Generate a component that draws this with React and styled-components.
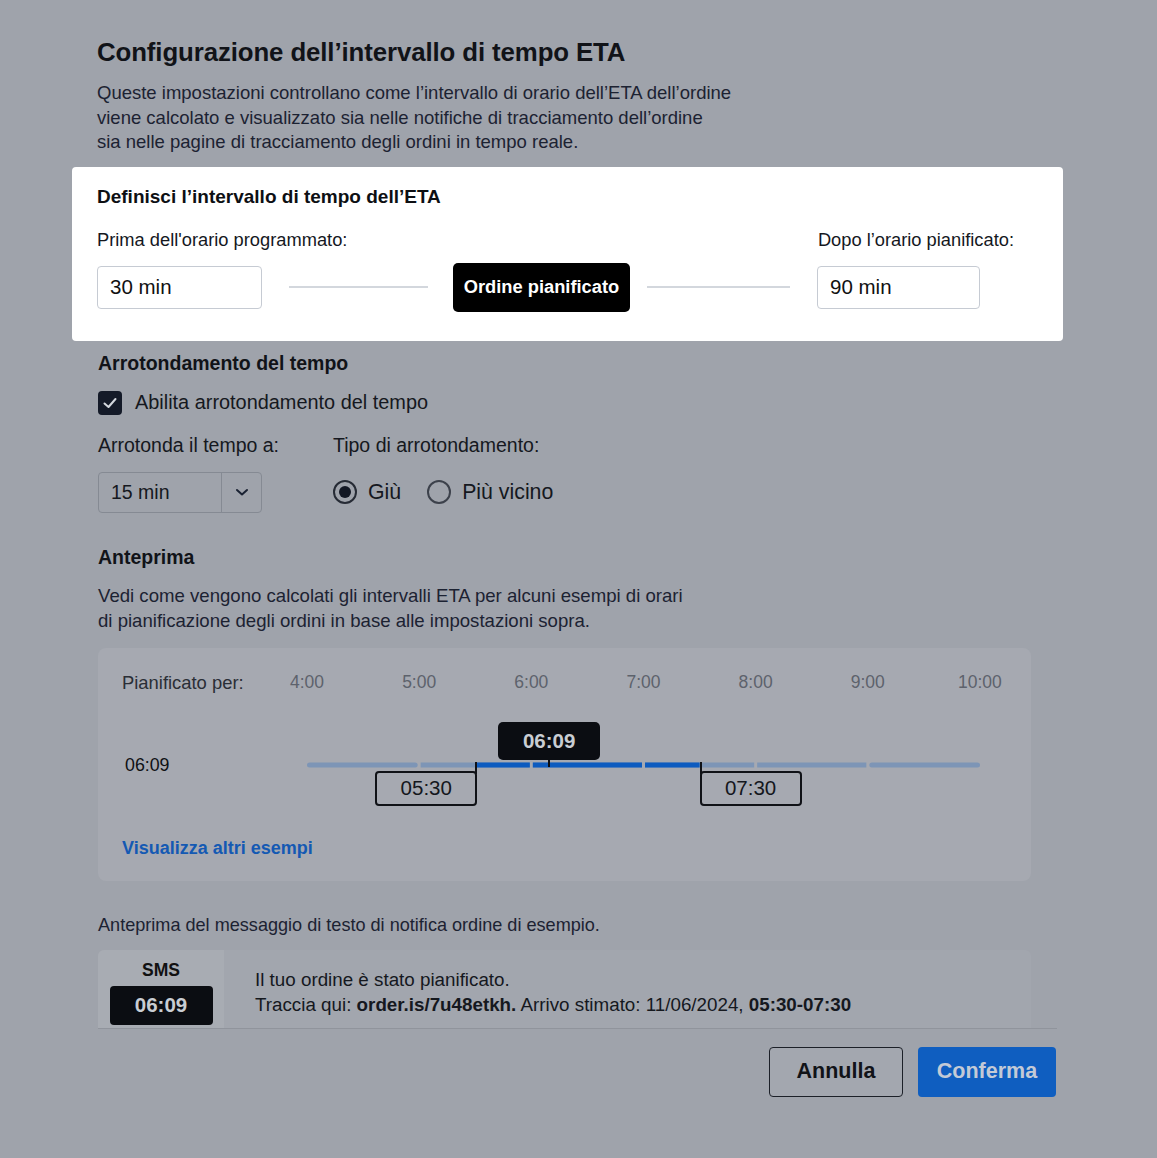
import React from 'react'
import styled, { createGlobalStyle } from 'styled-components'

const GlobalStyle = createGlobalStyle`
  html, body {
    margin: 0;
    padding: 0;
    background: #9fa3ab;
  }
  body {
    font-family: "Liberation Sans", Arial, sans-serif;
    color: #13161c;
  }
`

const hours = ['4:00', '5:00', '6:00', '7:00', '8:00', '9:00', '10:00']
const TRACK_W = 673
const HOUR_W = TRACK_W / 6
// times as hours after 4:00
const example = { planned: 2 + 9 / 60, from: 1.5, to: 3.5 }

const Page = styled.div`
  width: 991px;
  margin-left: 72px;
  padding-top: 37px;
  padding-bottom: 60px;
`
const Header = styled.div`
  padding-left: 25px;
`
const Title = styled.h1`
  margin: 0;
  font-size: 25.8px;
  line-height: 30px;
  font-weight: 700;
  color: #111318;
  letter-spacing: -0.1px;
`
const Lead = styled.p`
  margin: 14px 0 0;
  font-size: 18.5px;
  line-height: 24.5px;
  color: #1c2232;
  white-space: nowrap;
`

const Spotlight = styled.section`
  margin-top: 12px;
  background: #fff;
  border-radius: 4px;
  padding: 19px 49px 29px 25px;
`
const SpotTitle = styled.h2`
  margin: 0;
  font-size: 19px;
  line-height: 22px;
  font-weight: 700;
  color: #0d0f13;
`
const LabelRow = styled.div`
  display: flex;
  justify-content: space-between;
  margin-top: 21px;
  font-size: 18.3px;
  line-height: 22px;
  color: #15181e;
`
const ControlRow = styled.div`
  display: flex;
  align-items: center;
  margin-top: 12px;
  height: 49px;
`
const MinInput = styled.div`
  box-sizing: border-box;
  width: ${p => p.$w}px;
  height: 43px;
  border: 1.5px solid #c6cbd3;
  border-radius: 4px;
  padding-left: 12px;
  display: flex;
  align-items: center;
  font-size: 20.5px;
  color: #111;
`
const Connector = styled.div`
  width: ${p => p.$w}px;
  height: 2px;
  background: #d3d7dd;
  margin: 0 ${p => p.$r}px 0 ${p => p.$l}px;
`
const PlannedButton = styled.div`
  width: 177px;
  height: 49px;
  border-radius: 5px;
  background: #000;
  color: #fff;
  font-weight: 700;
  font-size: 18.3px;
  display: flex;
  align-items: center;
  justify-content: center;
`

const Body = styled.div`
  width: 959px;
  padding-left: 26px;
`
const SectionTitle = styled.h3`
  margin: ${p => p.$mt}px 0 0;
  font-size: 19.5px;
  line-height: 22px;
  font-weight: 700;
  color: #111318;
`
const CheckRow = styled.label`
  display: flex;
  align-items: center;
  gap: 13px;
  margin-top: 17px;
  font-size: 19.9px;
  color: #151820;
`
const CheckBox = styled.span`
  width: 24px;
  height: 24px;
  border-radius: 4px;
  background: #141a28;
  display: flex;
  align-items: center;
  justify-content: center;
`
const RoundingGrid = styled.div`
  display: grid;
  grid-template-columns: 235px 1fr;
  grid-template-rows: 22px 41px;
  row-gap: 15px;
  align-items: center;
  margin-top: 20px;
  font-size: 19.5px;
  color: #151820;
`
const Select = styled.div`
  box-sizing: border-box;
  width: 164px;
  height: 41px;
  border: 1.5px solid #858a93;
  border-radius: 4px;
  display: grid;
  grid-template-columns: 1fr 40px;
  font-size: 19.5px;
`
const SelectValue = styled.span`
  display: flex;
  align-items: center;
  padding-left: 12px;
`
const SelectArrow = styled.span`
  border-left: 1.5px solid #858a93;
  display: flex;
  align-items: center;
  justify-content: center;
`
const Radios = styled.div`
  display: flex;
  align-items: center;
  gap: 26px;
`
const Radio = styled.label`
  display: flex;
  align-items: center;
  gap: 11px;
  font-size: 21.3px;
  color: #151820;
`
const RadioDot = styled.span`
  box-sizing: border-box;
  width: 24px;
  height: 24px;
  border-radius: 50%;
  border: 2px solid ${p => (p.$on ? '#262b35' : '#3c414b')};
  display: flex;
  align-items: center;
  justify-content: center;
  &::after {
    content: '';
    width: 12px;
    height: 12px;
    border-radius: 50%;
    background: #131824;
    display: ${p => (p.$on ? 'block' : 'none')};
  }
`
const Text = styled.p`
  margin: ${p => p.$mt}px 0 0;
  font-size: ${p => p.$size || 18.6}px;
  line-height: 25px;
  color: #1c2232;
`

const PreviewPanel = styled.div`
  width: 933px;
  box-sizing: border-box;
  margin-top: 15px;
  background: #a6a9b1;
  border-radius: 8px;
  padding: 24px 24px 23px;
`
const ScaleRow = styled.div`
  display: grid;
  grid-template-columns: 185px ${TRACK_W}px;
  align-items: center;
  height: 20px;
`
const RowLabel = styled.span`
  font-size: ${p => (p.$strong ? 17.8 : 18.4)}px;
  color: ${p => (p.$strong ? '#0e1014' : '#2a2e36')};
  font-weight: ${p => (p.$strong ? 500 : 400)};
  padding-left: ${p => (p.$strong ? 3 : 0)}px;
  padding-top: ${p => (p.$strong ? 4 : 0)}px;
`
const Hours = styled.div`
  display: flex;
  justify-content: space-between;
`
const Hour = styled.span`
  width: 0;
  display: flex;
  justify-content: center;
  white-space: nowrap;
  font-size: 17.5px;
  color: #5d626c;
`
const TimelineRow = styled.div`
  display: grid;
  grid-template-columns: 185px ${TRACK_W}px;
  align-items: center;
  height: 84px;
  margin-top: 30px;
`
const Track = styled.div`
  position: relative;
  height: 84px;
`
const TrackSvg = styled.svg`
  display: block;
  margin-top: 40px;
`
const PlannedBadge = styled.div`
  position: absolute;
  top: 0;
  width: 102px;
  height: 38px;
  margin-left: -50px;
  border-radius: 5px;
  background: #0b0d12;
  color: #c9cdd3;
  font-weight: 700;
  font-size: 20.5px;
  display: flex;
  align-items: center;
  justify-content: center;
  &::after {
    content: '';
    position: absolute;
    left: 50px;
    bottom: -7px;
    width: 2px;
    height: 8px;
    background: #0b0d12;
  }
`
const EdgeBadge = styled.div`
  position: absolute;
  top: 49px;
  box-sizing: border-box;
  width: 102px;
  height: 35px;
  margin-left: ${p => (p.$side === 'left' ? -100 : 0)}px;
  border: 2px solid #101217;
  border-radius: 4px;
  font-size: 20.5px;
  color: #14171d;
  display: flex;
  align-items: center;
  justify-content: center;
  &::before {
    content: '';
    position: absolute;
    top: -11px;
    ${p => (p.$side === 'left' ? 'right: -2px;' : 'left: -2px;')}
    width: 2px;
    height: 12px;
    background: #101217;
  }
`
const Link = styled.a`
  display: block;
  margin-top: 32px;
  font-size: 18px;
  line-height: 20px;
  font-weight: 700;
  color: #1459b3;
  text-decoration: none;
`

const SmsWrap = styled.div`
  margin-top: 12px;
  border-bottom: 1px solid #90949c;
`
const SmsPanel = styled.div`
  width: 933px;
  height: 78px;
  display: grid;
  grid-template-columns: 126px 1fr;
  background: #a2a6ae;
  border-radius: 6px 6px 0 0;
  overflow: hidden;
`
const SmsSide = styled.div`
  background: #a8acb3;
  display: flex;
  flex-direction: column;
  align-items: center;
  padding-top: 9px;
`
const SmsTag = styled.span`
  font-weight: 700;
  font-size: 17.5px;
  line-height: 22px;
  color: #111;
`
const SmsTime = styled.span`
  margin-top: 5px;
  width: 103px;
  height: 39px;
  border-radius: 4px;
  background: #0b0d12;
  color: #c9cdd3;
  font-weight: 700;
  font-size: 20.5px;
  display: flex;
  align-items: center;
  justify-content: center;
`
const SmsText = styled.div`
  padding: 17px 0 0 31px;
  font-size: 18.8px;
  line-height: 25px;
  color: #15181e;
  b {
    font-weight: 700;
  }
`
const Footer = styled.div`
  display: flex;
  justify-content: flex-end;
  gap: 15px;
  margin-top: 18px;
  padding-right: 1px;
`
const Button = styled.button`
  box-sizing: border-box;
  width: ${p => p.$w}px;
  height: 50px;
  border-radius: 4px;
  font-family: inherit;
  font-weight: 700;
  font-size: 21.5px;
  border: ${p => (p.$primary ? 'none' : '1.5px solid #1c2028')};
  background: ${p => (p.$primary ? '#0f5ec0' : '#a3a7af')};
  color: ${p => (p.$primary ? '#c3cad6' : '#111318')};
`

const Segments = ({ from, to }) => {
  const a = from * HOUR_W
  const b = to * HOUR_W
  return (
    <TrackSvg width={TRACK_W} height="6" viewBox={`0 0 ${TRACK_W} 6`}>
      {hours.slice(0, 6).map((h, i) => {
        const x1 = i * HOUR_W + (i > 0 ? 1.5 : 0)
        const x2 = (i + 1) * HOUR_W - (i < 5 ? 1.5 : 0)
        const d1 = Math.max(x1, a)
        const d2 = Math.min(x2, b)
        return (
          <g key={h}>
            <rect x={x1} y="0.5" width={x2 - x1} height="5" rx={i === 0 || i === 5 ? 2.5 : 0} fill="#7d95b6" />
            {d2 > d1 && <rect x={d1} y="0.5" width={d2 - d1} height="5" fill="#0d5bbf" />}
          </g>
        )
      })}
    </TrackSvg>
  )
}

const pct = v => `${(v / 6) * 100}%`

export default function App() {
  return (
    <>
      <GlobalStyle />
      <Page>
        <Header>
          <Title>Configurazione dell’intervallo di tempo ETA</Title>
          <Lead>
            Queste impostazioni controllano come l’intervallo di orario dell’ETA dell’ordine
            <br />
            viene calcolato e visualizzato sia nelle notifiche di tracciamento dell’ordine
            <br />
            sia nelle pagine di tracciamento degli ordini in tempo reale.
          </Lead>
        </Header>

        <Spotlight>
          <SpotTitle>Definisci l’intervallo di tempo dell’ETA</SpotTitle>
          <LabelRow>
            <span>Prima dell'orario programmato:</span>
            <span>Dopo l’orario pianificato:</span>
          </LabelRow>
          <ControlRow>
            <MinInput $w={165}>30 min</MinInput>
            <Connector $w={139} $l={27} $r={25} />
            <PlannedButton>Ordine pianificato</PlannedButton>
            <Connector $w={143} $l={17} $r={27} />
            <MinInput $w={163}>90 min</MinInput>
          </ControlRow>
        </Spotlight>

        <Body>
          <SectionTitle $mt={11}>Arrotondamento del tempo</SectionTitle>
          <CheckRow>
            <CheckBox>
              <svg width="16" height="16" viewBox="0 0 16 16">
                <polyline points="2.5,8.5 6.5,12 13.5,4" fill="none" stroke="#d4d8de" strokeWidth="2" strokeLinecap="round" strokeLinejoin="round" />
              </svg>
            </CheckBox>
            Abilita arrotondamento del tempo
          </CheckRow>
          <RoundingGrid>
            <span>Arrotonda il tempo a:</span>
            <span>Tipo di arrotondamento:</span>
            <Select>
              <SelectValue>15 min</SelectValue>
              <SelectArrow>
                <svg width="14" height="10" viewBox="0 0 14 10">
                  <polyline points="2,3 7,7.5 12,3" fill="none" stroke="#1a2233" strokeWidth="2" strokeLinecap="round" strokeLinejoin="round" />
                </svg>
              </SelectArrow>
            </Select>
            <Radios>
              <Radio><RadioDot $on />Giù</Radio>
              <Radio><RadioDot />Più vicino</Radio>
            </Radios>
          </RoundingGrid>

          <SectionTitle $mt={33}>Anteprima</SectionTitle>
          <Text $mt={15}>
            Vedi come vengono calcolati gli intervalli ETA per alcuni esempi di orari
            <br />
            di pianificazione degli ordini in base alle impostazioni sopra.
          </Text>

          <PreviewPanel>
            <ScaleRow>
              <RowLabel>Pianificato per:</RowLabel>
              <Hours>
                {hours.map(h => <Hour key={h}>{h}</Hour>)}
              </Hours>
            </ScaleRow>
            <TimelineRow>
              <RowLabel $strong>06:09</RowLabel>
              <Track>
                <Segments from={example.from} to={example.to} />
                <PlannedBadge style={{ left: pct(example.planned) }}>06:09</PlannedBadge>
                <EdgeBadge $side="left" style={{ left: pct(example.from) }}>05:30</EdgeBadge>
                <EdgeBadge $side="right" style={{ left: pct(example.to) }}>07:30</EdgeBadge>
              </Track>
            </TimelineRow>
            <Link href="#">Visualizza altri esempi</Link>
          </PreviewPanel>

          <Text $mt={32} $size={18.1}>Anteprima del messaggio di testo di notifica ordine di esempio.</Text>
          <SmsWrap>
            <SmsPanel>
              <SmsSide>
                <SmsTag>SMS</SmsTag>
                <SmsTime>06:09</SmsTime>
              </SmsSide>
              <SmsText>
                Il tuo ordine è stato pianificato.
                <br />
                Traccia qui: <b>order.is/7u48etkh.</b> Arrivo stimato: 11/06/2024, <b>05:30-07:30</b>
              </SmsText>
            </SmsPanel>
          </SmsWrap>
          <Footer>
            <Button $w={134}>Annulla</Button>
            <Button $w={138} $primary>Conferma</Button>
          </Footer>
        </Body>
      </Page>
    </>
  )
}
